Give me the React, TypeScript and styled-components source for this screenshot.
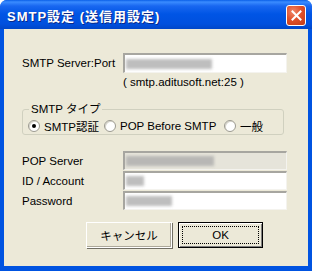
import React from "react";
import styled, { createGlobalStyle } from "styled-components";

const GlobalStyle = createGlobalStyle`
  html, body {
    margin: 0;
    padding: 0;
    background: #fff;
  }
  body {
    font-family: "Liberation Sans", "Noto Sans CJK JP", sans-serif;
    font-size: 11.5px;
    color: #000;
  }
`;

const Frame = styled.div`
  width: 312px;
  height: 271px;
  display: flex;
  flex-direction: column;
  background: #0053e1;
  border-radius: 7px 7px 0 0;
  overflow: hidden;
`;

const TitleBar = styled.div`
  height: 29px;
  flex: none;
  display: flex;
  align-items: center;
  justify-content: space-between;
  padding: 0 6px 0 7px;
  background: linear-gradient(
    to bottom,
    #0a5fe8 0px,
    #3b8cff 2px,
    #1967f0 6px,
    #0055e5 14px,
    #0050de 24px,
    #0046c8 29px
  );
`;

const Title = styled.div`
  color: #fff;
  font-weight: bold;
  font-size: 13px;
  letter-spacing: 1px;
  text-shadow: 1px 1px 0 #0a2a8a;
  padding-top: 1px;
`;

const CloseButton = styled.div`
  width: 20px;
  height: 21px;
  margin-top: 1px;
  box-sizing: border-box;
  border: 1px solid #fff;
  border-radius: 3px;
  background: radial-gradient(circle at 35% 30%, #f0876a 0%, #e0512c 45%, #c23a14 100%);
  display: flex;
  align-items: center;
  justify-content: center;
`;

const Body = styled.div`
  flex: 1;
  margin: 0 4px 5px 4px;
  background: #ece9d8;
  display: flex;
  flex-direction: column;
  padding: 24px 0 0 18px;
`;

const Row = styled.div`
  display: flex;
  align-items: center;
`;

const Label = styled.div`
  width: 101px;
  flex: none;
`;

const TextBox = styled.div<{ disabled?: boolean; h?: number }>`
  width: 164px;
  height: ${(p) => p.h ?? 19}px;
  box-sizing: border-box;
  border-top: 2px solid #a7a6a0;
  border-left: 2px solid #a7a6a0;
  border-right: 1px solid #f4f3ee;
  border-bottom: 1px solid #f4f3ee;
  background: ${(p) => (p.disabled ? "#e6e4da" : "#fff")};
  display: flex;
  align-items: center;
  padding-left: 1px;
`;

const Blur = styled.span<{ w: number }>`
  display: block;
  width: ${(p) => p.w}px;
  height: 10px;
  background: #a9a9a9;
  filter: blur(1.6px);
  opacity: 0.75;
`;

const Hint = styled.div`
  margin: 2px 0 0 101px;
  line-height: 14px;
`;

const Group = styled.fieldset`
  margin: 14px 0 0 0;
  width: 262px;
  box-sizing: border-box;
  border: 1px solid #d0d0bf;
  border-radius: 3px;
  padding: 4px 0 1px 5px;
  display: flex;
  align-items: center;
`;

const Legend = styled.legend`
  padding: 0 2px;
  margin-left: 1px;
  line-height: 12px;
`;

const RadioItem = styled.label<{ w: number }>`
  display: flex;
  align-items: center;
  width: ${(p) => p.w}px;
  height: 14px;
`;

const RadioCircle = styled.span<{ checked?: boolean }>`
  width: 12px;
  height: 12px;
  box-sizing: border-box;
  border-radius: 50%;
  background: #fff;
  border: 1px solid #9c9a90;
  box-shadow: inset 1px 1px 0 #d8d6cc;
  margin-right: 4px;
  display: flex;
  align-items: center;
  justify-content: center;
  &::after {
    content: "";
    display: ${(p) => (p.checked ? "block" : "none")};
    width: 4px;
    height: 4px;
    border-radius: 50%;
    background: #000;
  }
`;

const Fields = styled.div`
  margin-top: 16px;
  display: flex;
  flex-direction: column;
  gap: 1px;
`;

const Buttons = styled.div`
  display: flex;
  gap: 6px;
  margin: 12px 0 0 64px;
`;

const Button = styled.div<{ primary?: boolean }>`
  width: ${(p) => (p.primary ? 85 : 86)}px;
  height: 26px;
  box-sizing: border-box;
  display: flex;
  align-items: center;
  justify-content: center;
  background: #ece9d8;
  border: 1px solid ${(p) => (p.primary ? "#000" : "#fff")};
  box-shadow: ${(p) =>
    p.primary
      ? "inset 1px 1px 0 #fff, inset -1px -1px 0 #808080"
      : "inset -1px -1px 0 #aca899, 1px 1px 0 #716f64"};
  position: relative;
`;

const Focus = styled.span`
  position: absolute;
  inset: 3px;
  border: 1px dotted #000;
`;

export default function App() {
  return (
    <>
      <GlobalStyle />
      <Frame>
        <TitleBar>
          <Title>SMTP設定 (送信用設定)</Title>
          <CloseButton>
            <svg width="11" height="11" viewBox="0 0 11 11">
              <path d="M1.5 1.5 L9.5 9.5 M9.5 1.5 L1.5 9.5" stroke="#fff" strokeWidth="2" strokeLinecap="square" />
            </svg>
          </CloseButton>
        </TitleBar>
        <Body>
          <Row>
            <Label>SMTP Server:Port</Label>
            <TextBox h={20}>
              <Blur w={86} />
            </TextBox>
          </Row>
          <Hint>( smtp.aditusoft.net:25 )</Hint>
          <Group>
            <Legend>SMTP タイプ</Legend>
            <RadioItem w={76}>
              <RadioCircle checked />
              SMTP認証
            </RadioItem>
            <RadioItem w={120}>
              <RadioCircle />
              POP Before SMTP
            </RadioItem>
            <RadioItem w={50}>
              <RadioCircle />
              一般
            </RadioItem>
          </Group>
          <Fields>
            <Row>
              <Label>POP Server</Label>
              <TextBox disabled>
                <Blur w={88} />
              </TextBox>
            </Row>
            <Row>
              <Label>ID / Account</Label>
              <TextBox>
                <Blur w={18} />
              </TextBox>
            </Row>
            <Row>
              <Label>Password</Label>
              <TextBox>
                <Blur w={46} />
              </TextBox>
            </Row>
          </Fields>
          <Buttons>
            <Button>キャンセル</Button>
            <Button primary>
              OK
              <Focus />
            </Button>
          </Buttons>
        </Body>
      </Frame>
    </>
  );
}
